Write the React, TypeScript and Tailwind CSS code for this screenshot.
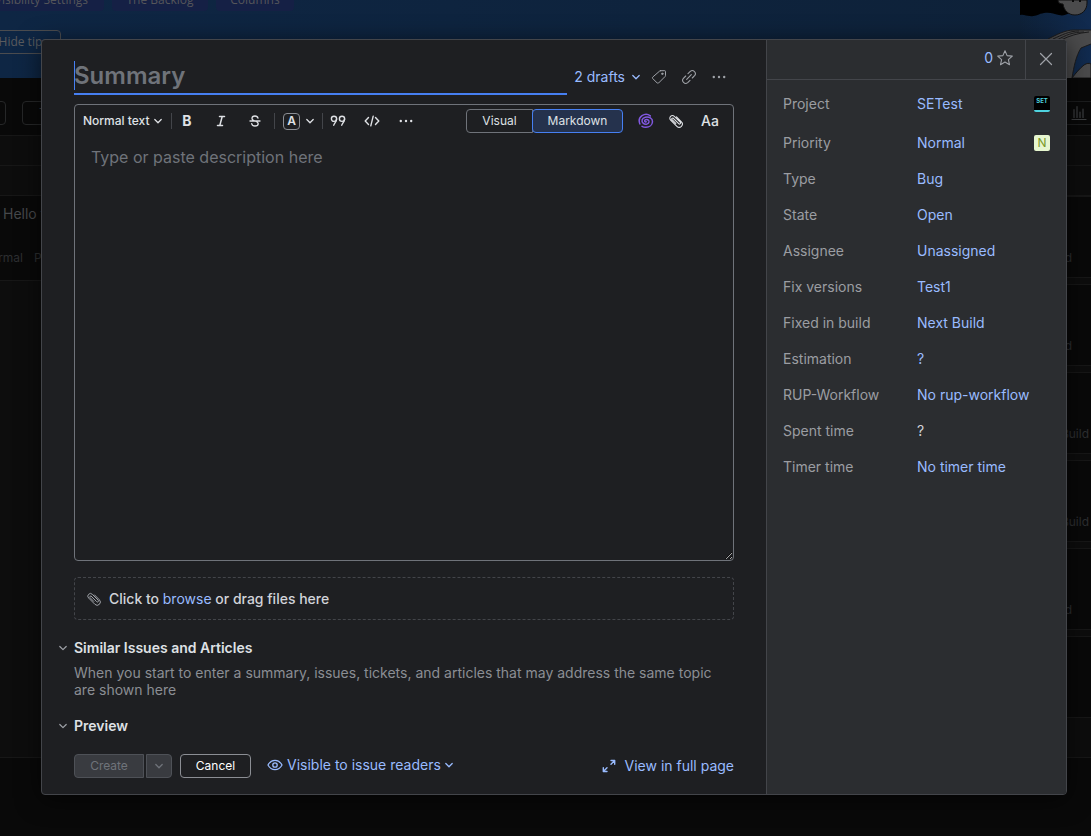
import type { ReactNode } from "react";

type IconProps = { children: ReactNode; className?: string; width?: number };

function Icon({ children, className = "size-4", width = 1 }: IconProps) {
  return (
    <svg
      viewBox="0 0 16 16"
      className={`${className} shrink-0`}
      fill="none"
      stroke="currentColor"
      strokeWidth={width}
      strokeLinecap="round"
      strokeLinejoin="round"
      aria-hidden="true"
    >
      {children}
    </svg>
  );
}

const Chevron = ({ className = "size-4", width = 1.3 }: { className?: string; width?: number }) => (
  <Icon className={className} width={width}>
    <path d="M4.800 6.500 8 9.700l3.200-3.200" />
  </Icon>
);

const Clip = ({ width = 1 }: { width?: number }) => (
  <Icon width={width}>
    <path d="m5.300 5.300 5.400 5.400a1 1 0 0 0 1.500-1.500L6.300 3.300a2.600 2.600 0 0 0-3.700 0 2.600 2.600 0 0 0 0 3.700l6.300 6.300a3.200 3.200 0 0 0 4.500 0 3.200 3.200 0 0 0 0-4.500L8.500 3.900M5.300 5.300a.9.9 0 0 0-1.300 1.300l3.800 3.800" />
  </Icon>
);

const Dots = () => (
  <Icon>
    <g fill="currentColor" stroke="none">
      <circle cx="2.8" cy="8" r="1.2" />
      <circle cx="8" cy="8" r="1.2" />
      <circle cx="13.2" cy="8" r="1.2" />
    </g>
  </Icon>
);

function ToolButton({ label, children }: { label: string; children: ReactNode }) {
  return (
    <button type="button" aria-label={label} className="flex h-6 w-[30px] items-center justify-center">
      {children}
    </button>
  );
}

const Divider = () => <span className="h-4 w-px bg-[#43454a]" />;

const cards = ["Next build", "Next build", "Next Build", "Next Build", "Next build"];

function Board() {
  return (
    <div aria-hidden="true" className="flex min-h-screen flex-col bg-[#090909] text-[#3d3f41]">
      <header className="flex h-[78px] justify-between overflow-hidden bg-gradient-to-r from-[#0e2644] to-[#0e2138]">
        <div className="-mt-3 -ml-5 font-['Open_Sans','Noto_Sans',sans-serif] text-xs">
          <div className="flex gap-2 text-[#55565a]">
            <span className="flex h-[23px] w-[124px] items-center justify-end rounded bg-[#152045] pr-4">Visibility Settings</span>
            <span className="flex h-[23px] w-24 items-center justify-center rounded bg-[#152045]">The Backlog</span>
            <span className="flex h-[23px] w-[78px] items-center justify-center rounded bg-[#152045]">Columns</span>
          </div>
          <span className="mt-[19px] flex h-6 w-[81px] items-center justify-end rounded border border-[#4b4c4f] pr-3 text-[#5a5b5e]">
            Hide tips
          </span>
        </div>
        <svg viewBox="0 0 71 78" className="h-[78px] w-[71px]">
          <defs>
            <linearGradient id="glow">
              <stop offset="0" stopColor="#112b50" stopOpacity="0" />
              <stop offset="1" stopColor="#112b50" />
            </linearGradient>
          </defs>
          <path d="M0 0h71v78H0z" fill="url(#glow)" />
          <path d="M0 0h50v13c-5 2-7 3-11 2-6-1-8-3-15-2-6 1-9 4-14 3-4 0-6-2-10-1z" fill="#000" />
          <path d="M38 0c0 3 2 4 5 4 1 7 6 11 12 11 7 0 12-5 12-12V0z" fill="#4b4b4c" stroke="#111" />
          <path d="M53 0v2M60 0v2" stroke="#0b0b0b" strokeWidth="2" />
          <path d="M28 39c8-4 17-9 26-9h17v14l-10 4c-5 8-7 18-9 30h-5V42z" fill="#4b4b4c" />
          <path d="M71 30H54c-9 0-18 5-26 9M33 39c9-4 16-8 26-8M37 40c9-5 16-8 27-8M41 40c8-4 17-7 28-8" fill="none" stroke="#1c1c1d" />
          <path d="M71 44l-10 4c-5 8-7 18-9 30" fill="none" stroke="#1c1c1d" />
          <path d="M52 78c3-4 8-10 12-13 3-2 5-2 7-1v14z" fill="#4b4b4c" stroke="#171717" />
        </svg>
      </header>
      <div className="flex h-[58px] items-center justify-between overflow-hidden border-b border-[#171717]">
        <div className="-ml-2 mt-3 flex gap-4">
          <span className="h-6 w-3.5 rounded border border-[#262728]" />
          <span className="flex h-6 w-16 items-center rounded border border-[#262728] pl-4 text-xs">Title</span>
        </div>
        <div className="mt-3 flex h-6 w-10 items-center justify-end border-y border-[#1c1d1e] pr-1">
          <Icon width={1.2}>
            <path d="M1 14.5h14M3 12.5v-8M6 12.5V1.500M9 12.500V7M12 12.500V4" />
          </Icon>
        </div>
      </div>
      <div className="h-[30px] border-b border-[#171717] bg-[#0d0d0d]" />
      <div className="h-[30px] border-b border-[#171717] bg-[#0d0d0d]" />
      <div className="flex h-[562px] justify-between border-b border-[#171717] bg-[#0d0d0d] text-xs text-[#2d2f31]">
        <div className="h-[85px] w-48 overflow-hidden border-b border-[#171717] bg-[#090909]">
          <p className="pt-2 pl-[3px] text-sm text-[#46484b]">Hello there</p>
          <p className="-ml-5 mt-[26px] flex gap-[11px]"><span className="w-[43px] text-right">Normal</span><span>Project</span></p>
        </div>
        <div className="flex flex-col gap-1.5">
          {cards.map((text, i) => (
            <div key={i} className="flex h-[82px] w-40 items-end justify-end border-y border-[#171717] bg-[#090909] pb-[11px]">
              <span className={text === "Next Build" ? "pr-0.5" : "pr-[19px]"}>{text}</span>
            </div>
          ))}
          <div className="h-[82px] border-y border-[#171717] bg-[#090909]" />
        </div>
      </div>
    </div>
  );
}

const fields = [
  { name: "Project", value: "SETest" },
  { name: "Priority", value: "Normal" },
  { name: "Type", value: "Bug" },
  { name: "State", value: "Open" },
  { name: "Assignee", value: "Unassigned" },
  { name: "Fix versions", value: "Test1" },
  { name: "Fixed in build", value: "Next Build" },
  { name: "Estimation", value: "?" },
  { name: "RUP-Workflow", value: "No rup-workflow" },
  { name: "Spent time", value: "?" },
  { name: "Timer time", value: "No timer time" },
];

function Sidebar() {
  return (
    <aside className="w-[300px] shrink-0 border-l border-[#43454a] bg-[#2b2d30]">
      <div className="flex h-10 justify-end border-b border-[#43454a]">
        <button type="button" aria-label="Votes and star" className="flex items-center gap-1 pr-3 pb-[3px] text-[#99bbff]">
          0
          <Icon className="size-4 text-[#9fa2a8]" width={1.1}>
            <path d="m8 .8 2.100 4.800 5.200.5-3.900 3.500 1.100 5.100L8 12l-4.500 2.700 1.100-5.100L.7 6.100l5.200-.5z" />
          </Icon>
        </button>
        <button type="button" aria-label="Close" className="flex w-[41px] items-center justify-center border-l border-[#43454a] pb-0.5 text-[#9fa2a8]">
          <Icon width={1.2}>
            <path d="m2.500 2.500 11 11M13.500 2.500l-11 11" />
          </Icon>
        </button>
      </div>
      <dl className="px-4 pt-1.5">
        {fields.map(({ name, value }) => (
          <div key={name} className={`flex h-9 items-center ${name === "Project" ? "mb-[3px]" : ""}`}>
            <dt className="w-[134px] text-[#9b9da2]">{name}</dt>
            <dd className="flex flex-1 items-center justify-between">
              {name === "Spent time" ? (
                <span className="text-[#d1d3d9]">{value}</span>
              ) : (
                <button type="button" className="text-[#99bbff]">{value}</button>
              )}
              {name === "Project" && (
                <span className="flex size-4 justify-center rounded-xs border-b-2 border-[#4fd3df] bg-black text-[6px]/[10px] font-bold text-[#4fd3df]">
                  SET
                </span>
              )}
              {name === "Priority" && (
                <span className="flex size-4 items-center justify-center rounded-xs bg-[#e6f6cf] text-xs text-[#7a9a2a]">N</span>
              )}
            </dd>
          </div>
        ))}
      </dl>
    </aside>
  );
}

function Editor() {
  return (
    <div className="mt-[9px] flex flex-1 flex-col rounded border border-[#6f737a]">
      <div className="flex h-8 shrink-0 items-center justify-between pr-2 text-xs text-[#dfe1e5]">
        <div className="flex items-center">
          <button type="button" className="flex w-24 items-center pl-2 font-medium whitespace-nowrap">
            Normal text
            <Chevron />
          </button>
          <Divider />
          <div className="mr-1 flex gap-1">
            <ToolButton label="Bold"><b className="text-sm font-bold">B</b></ToolButton>
            <ToolButton label="Italic">
              <Icon width={1.5}><path d="M6.500 3.500h5M4.500 12.500h5M9.200 3.500l-2.400 9" /></Icon>
            </ToolButton>
            <ToolButton label="Strikethrough">
              <Icon width={1.3}><path d="M3 8h10M11 5.200C10.700 3.800 9.500 3 8 3 6.300 3 5 3.900 5 5.400 5 6.600 5.900 7.300 8 8c2.300.7 3.200 1.400 3.200 2.700 0 1.400-1.300 2.300-3.200 2.300-1.800 0-3-.9-3.300-2.400" /></Icon>
            </ToolButton>
          </div>
          <Divider />
          <button type="button" aria-label="Text color" className="flex h-6 w-[47px] items-center justify-center gap-0.5 pl-1">
            <span className="flex size-[17px] items-center justify-center rounded border border-[#8b8e94] text-xs font-semibold">A</span>
            <Chevron />
          </button>
          <Divider />
          <div className="flex gap-1">
            <ToolButton label="Quote">
              <Icon width={1.4}>
                <circle cx="4" cy="5.800" r="2.600" />
                <path d="M6.600 6c0 2.600-1.600 3.400-2.900 6.200" />
                <circle cx="12" cy="5.800" r="2.600" />
                <path d="M14.600 6c0 2.600-1.600 3.400-2.900 6.200" />
              </Icon>
            </ToolButton>
            <ToolButton label="Code">
              <Icon width={1.400}><path d="M4.500 4.500 1.200 8l3.300 3.500M11.500 4.500 14.800 8l-3.300 3.500M9.200 3.200l-2.400 9.600" /></Icon>
            </ToolButton>
            <ToolButton label="More formatting"><Dots /></ToolButton>
          </div>
        </div>
        <div className="flex items-center">
          <div className="mr-2 flex">
            <button type="button" className="h-6 w-[67px] rounded-l border border-[#6f737a]">Visual</button>
            <button type="button" aria-pressed="true" className="-ml-px h-6 w-[91px] rounded border border-[#467ff2] bg-[#25324d]">Markdown</button>
          </div>
          <ToolButton label="AI assistant">
            <Icon className="size-4 text-[#8158e0]" width={1.500}>
              <path d="M8.200 8.800c-1.300.5-2.200-1-1-1.900 1.500-1.100 4 0 3.800 2-.3 2.300-3.600 3.200-5.700 1.500C2.900 8.400 4 5 7.300 4.200c3.800-.8 7.400 1.300 7.200 4.500-.2 3.300-3.100 5.600-6.700 5.600-1.500 0-2.800-.4-3.800-1" />
              <path d="M1.900 11C.6 7.800 1.400 4.400 4 2.600 6.600.9 10 1 12.300 2.900" />
            </Icon>
          </ToolButton>
          <ToolButton label="Attach"><Clip width={1.100} /></ToolButton>
          <span className="ml-1"><ToolButton label="Text size"><span className="text-sm font-medium">Aa</span></ToolButton></span>
        </div>
      </div>
      <textarea
        aria-label="Description"
        placeholder="Type or paste description here"
        className="block w-full flex-1 resize-y bg-transparent px-4 py-2 text-base text-[#dfe1e5] outline-none [color-scheme:dark] placeholder:text-[#6f737a]"
      />
    </div>
  );
}

function Section({ title, children }: { title: string; children?: ReactNode }) {
  return (
    <section>
      <button type="button" aria-expanded="true" className="-ml-[19px] flex items-center gap-[3px] font-semibold text-[#dfe1e5]">
        <Chevron className="size-4 text-[#9fa2a8]" width={1.2} />
        {title}
      </button>
      {children}
    </section>
  );
}

export default function App() {
  return (
    <div className="relative overflow-hidden font-['Inter','Liberation_Sans',sans-serif] text-sm">
      <Board />
      <div className="absolute inset-0 flex pt-[39px] pr-6 pb-[41px] pl-[41px]">
        <div
          role="dialog"
          aria-label="New issue"
          className="flex flex-1 overflow-hidden rounded border border-[#43454a] bg-[#1e1f22] shadow-[0_4px_24px_rgba(0,0,0,0.6)]"
        >
          <main className="flex min-w-0 flex-1 flex-col px-8 pt-4 pb-4">
            <div className="flex items-end">
              <div className="relative flex-1 border-b-2 border-[#467ff2] pt-1">
                <span className="absolute top-[5px] left-0 h-[29px] w-px bg-[#467ff2]" />
                <input
                  aria-label="Summary"
                  placeholder="Summary"
                  className="block h-[33px] w-full bg-transparent pb-0.5 text-2xl font-semibold text-[#dfe1e5] outline-none placeholder:text-[#6f737a]"
                />
              </div>
              <div className="flex items-center pb-1.5 pl-[7px] text-[#9fa2a8]">
                <button type="button" className="flex items-center gap-[3px] text-[#99bbff]">
                  2 drafts
                  <Chevron />
                </button>
                <ToolButton label="Add tag">
                  <Icon width={1}>
                    <path d="M9.500 1.700h4.300c.4 0 .7.300.7.700v4.300c0 .3-.1.500-.3.700l-6.600 6.600c-.4.400-1 .4-1.400 0L1.700 9.500c-.4-.4-.4-1 0-1.400l6.900-6c.3-.2.500-.4.900-.4z" />
                    <circle cx="11.300" cy="4.800" r=".7" fill="currentColor" />
                  </Icon>
                </ToolButton>
                <ToolButton label="Copy link">
                  <Icon width={1.1}>
                    <path d="m5.700 10.300 4.600-4.600M7 4.700l2.300-2.300a3.050 3.050 0 0 1 4.300 4.300L11.300 9M9 11.300l-2.300 2.300a3.050 3.050 0 0 1-4.300-4.300L4.700 7" />
                  </Icon>
                </ToolButton>
                <ToolButton label="More actions"><Dots /></ToolButton>
              </div>
            </div>

            <Editor />

            <div className="mt-4 flex h-[43px] shrink-0 items-center gap-[7px] rounded border border-dashed border-[#43454a] px-[11px] font-medium text-[#d1d3d9]">
              <span className="text-[#9fa2a8]"><Clip /></span>
              <p>Click to <a href="#browse" className="font-normal text-[#99bbff]">browse</a> or drag files here</p>
            </div>

            <div className="mt-[18px] flex flex-col gap-[18px]">
              <Section title="Similar Issues and Articles">
                <p className="mt-1.5 text-sm/[17px] text-[#8b8e94]">
                  When you start to enter a summary, issues, tickets, and articles that may address the same topic are shown here
                </p>
              </Section>
              <Section title="Preview" />
            </div>

            <div className="mt-[18px] flex items-center text-[#99bbff]">
              <button type="button" disabled className="h-6 w-[70px] rounded-l border border-[#4e5157] bg-[#393b40] text-xs text-[#6f737a]">Create</button>
              <button type="button" disabled aria-label="Create options" className="ml-0.5 flex h-6 w-[26px] items-center justify-center rounded-r border border-[#4e5157] bg-[#393b40] text-[#6f737a]">
                <Chevron />
              </button>
              <button type="button" className="ml-2 h-6 w-[71px] rounded border border-[#8b8e94] text-xs text-white">Cancel</button>
              <button type="button" className="ml-4 flex items-center gap-1 pb-0.5">
                <Icon width={1.3}>
                  <path d="M1 8c1.600-3 4-4.700 7-4.700S13.400 5 15 8c-1.600 3-4 4.700-7 4.700S2.600 11 1 8z" />
                  <circle cx="8" cy="8" r="2.200" />
                </Icon>
                <span className="flex items-center">Visible to issue readers<Chevron /></span>
              </button>
              <a href="#full" className="ml-auto flex items-center gap-2">
                <Icon width={1.400}>
                  <path d="M10 2.500h3.700v3.700M13.200 3 10 6.200M6 13.500H2.300V9.800M2.800 13 6 9.800" />
                </Icon>
                View in full page
              </a>
            </div>
          </main>
          <Sidebar />
        </div>
      </div>
    </div>
  );
}
